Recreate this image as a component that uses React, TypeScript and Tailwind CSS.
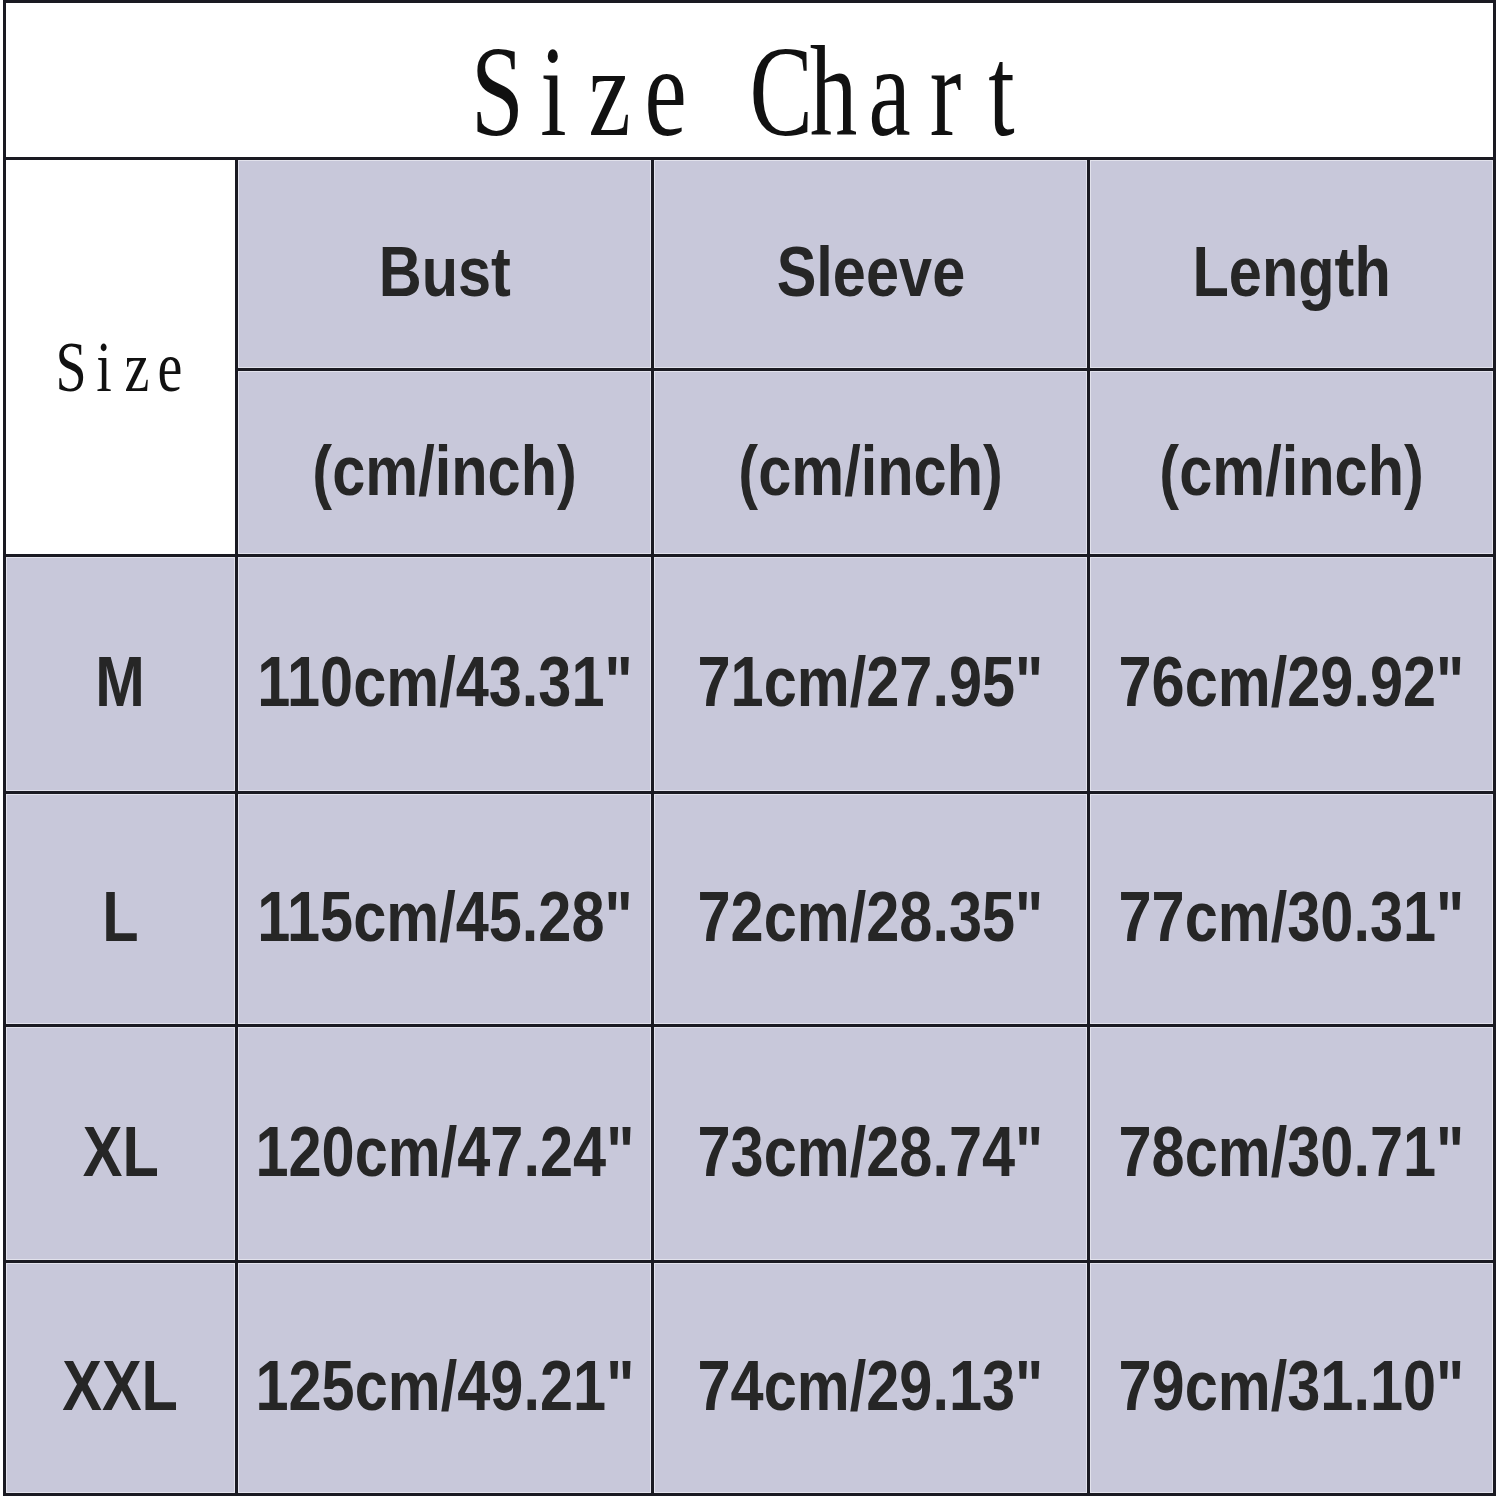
import React from "react";

const rows = [
  { size: "M", bust: '110cm/43.31"', sleeve: '71cm/27.95"', length: '76cm/29.92"' },
  { size: "L", bust: '115cm/45.28"', sleeve: '72cm/28.35"', length: '77cm/30.31"' },
  { size: "XL", bust: '120cm/47.24"', sleeve: '73cm/28.74"', length: '78cm/30.71"' },
  { size: "XXL", bust: '125cm/49.21"', sleeve: '74cm/29.13"', length: '79cm/31.10"' },
];

// serif text drawn as fixed-width characters, like the half-width CJK font in the chart
const MonoSerif: React.FC<{ text: string; big?: boolean }> = ({ text, big }) => (
  <span
    className={
      big
        ? "flex text-[95px] leading-none text-[#111] scale-y-[1.36] translate-y-[12px]"
        : "flex text-[56px] leading-none text-[#111] scale-y-[1.27] translate-y-[10px]"
    }
    style={{ fontFamily: '"Liberation Serif", serif' }}
  >
    {text.split("").map((ch, i) => (
      <span key={i} className={big ? "w-[56px] text-center" : "w-[33px] text-center"}>
        {ch === " " ? "\u00a0" : ch}
      </span>
    ))}
  </span>
);

const Narrow: React.FC<{ children: React.ReactNode }> = ({ children }) => (
  <span className="inline-block whitespace-nowrap text-[70px] leading-none font-bold text-[#262626] scale-x-[0.85] translate-y-[8px]">
    {children}
  </span>
);

const Cell: React.FC<{ children?: React.ReactNode; className?: string }> = ({ children, className }) => (
  <div
    className={
      "flex items-center justify-center bg-[#c8c8da] shadow-[inset_0_0_0_1px_#e2e2ec] " + (className ?? "")
    }
  >
    {children}
  </div>
);

export default function App() {
  return (
    <div className="w-[1500px] h-[1500px] bg-white pl-[3px]" style={{ fontFamily: '"Liberation Sans", Arial, sans-serif' }}>
      <div className="grid w-[1493px] grid-cols-[229px_413px_433px_403px] grid-rows-[154px_208px_183px_234px_230px_233px_230px] gap-[3px] bg-[#1a1a22] p-[3px]">
        {/* titel */}
        <div className="col-span-4 flex items-center justify-center bg-white">
          <MonoSerif text="Size Chart" big />
        </div>

        {/* kop */}
        <div className="row-span-2 flex items-center justify-center bg-white">
          <MonoSerif text="Size" />
        </div>
        <Cell>
          <Narrow>Bust</Narrow>
        </Cell>
        <Cell>
          <Narrow>Sleeve</Narrow>
        </Cell>
        <Cell>
          <Narrow>Length</Narrow>
        </Cell>
        <Cell>
          <Narrow>(cm/inch)</Narrow>
        </Cell>
        <Cell>
          <Narrow>(cm/inch)</Narrow>
        </Cell>
        <Cell>
          <Narrow>(cm/inch)</Narrow>
        </Cell>

        {rows.map((r) => (
          <React.Fragment key={r.size}>
            <Cell>
              <Narrow>{r.size}</Narrow>
            </Cell>
            <Cell>
              <Narrow>{r.bust}</Narrow>
            </Cell>
            <Cell>
              <Narrow>{r.sleeve}</Narrow>
            </Cell>
            <Cell>
              <Narrow>{r.length}</Narrow>
            </Cell>
          </React.Fragment>
        ))}
      </div>
    </div>
  );
}
